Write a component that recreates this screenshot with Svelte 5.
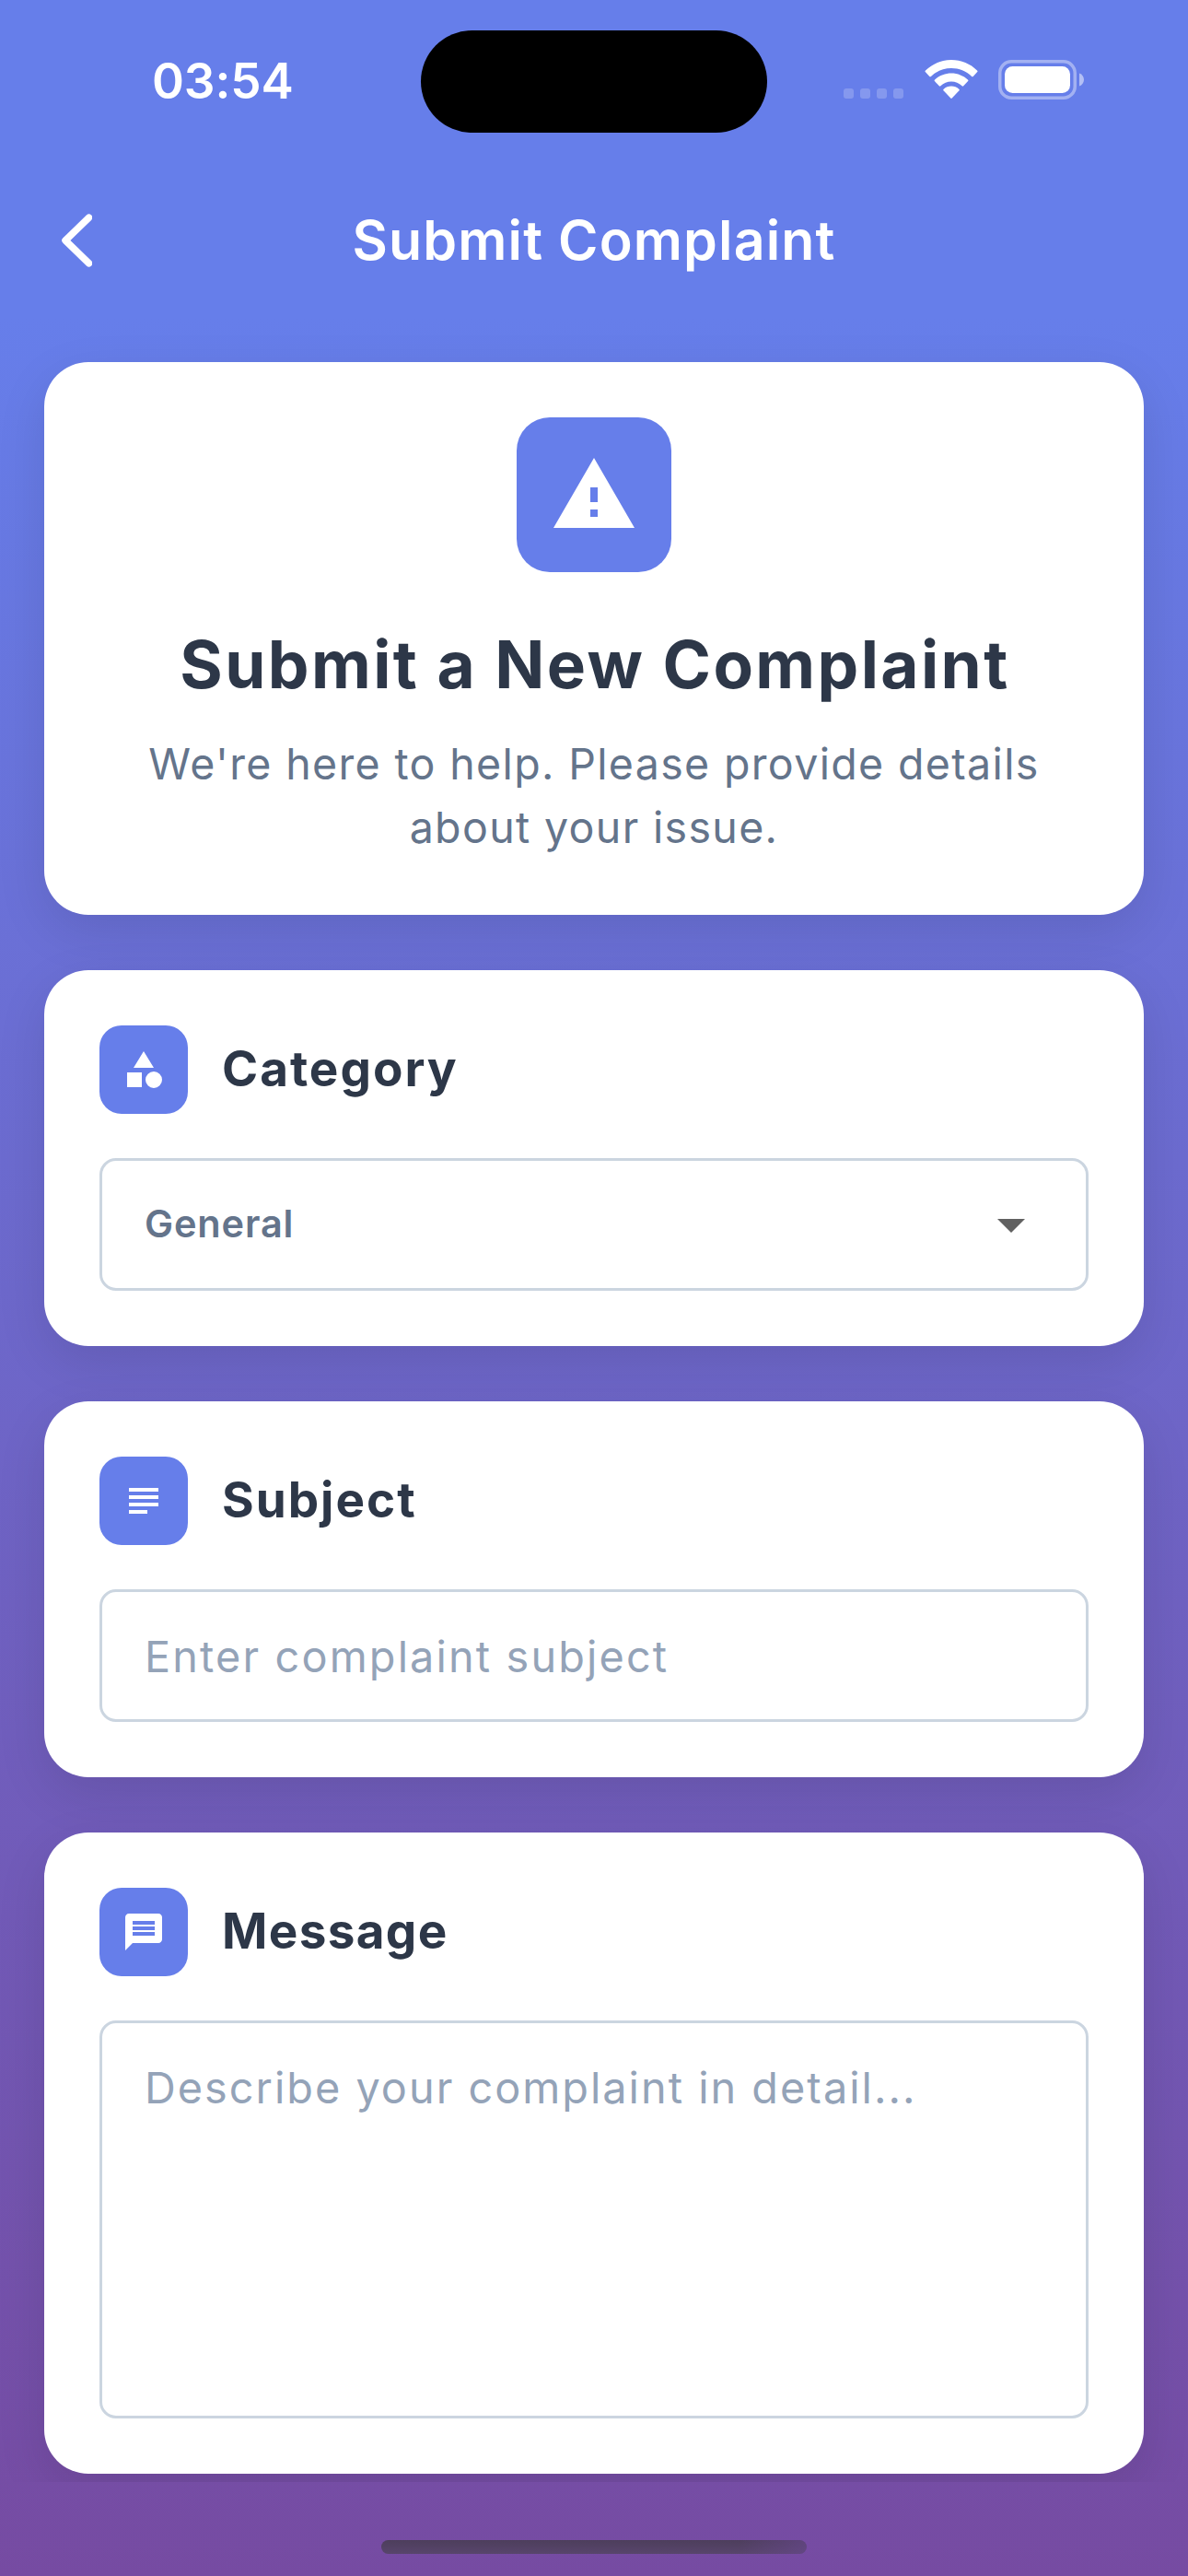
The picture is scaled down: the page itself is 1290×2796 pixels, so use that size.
<script>
  const sections = [
    { id: 'category', title: 'Category', kind: 'select', text: 'General' },
    { id: 'subject', title: 'Subject', kind: 'input', text: 'Enter complaint subject' },
    { id: 'message', title: 'Message', kind: 'area', text: 'Describe your complaint in detail...' }
  ];
  const icons = {
    category: 'M12 2l-5.5 9h11z M22 17.5a4.5 4.5 0 1 1-9 0a4.5 4.5 0 1 1 9 0z M3 13.5h8v8H3z',
    subject: 'M14 17H4v2h10v-2zm6-8H4v2h16V9zM4 15h16v-2H4v2zM4 5v2h16V5H4z',
    message: 'M20 2H4c-1.1 0-1.99.9-1.99 2L2 22l4-4h14c1.1 0 2-.9 2-2V4c0-1.1-.9-2-2-2zm-2 12H6v-2h12v2zm0-3H6V9h12v2zm0-3H6V6h12v2z'
  };
</script>

<div class="screen">
  <header>
    <div class="status">
      <span class="time">03:54</span>
      <div class="island"></div>
      <div class="indicators">
        <svg class="dots" viewBox="0 0 65 11"><rect width="11" height="11" rx="3" /><rect x="18" width="11" height="11" rx="3" /><rect x="36" width="11" height="11" rx="3" /><rect x="54" width="11" height="11" rx="3" /></svg>
        <svg class="wifi" viewBox="0 0 58 42">
          <path d="M29 0C39.800 0 49.700 4.200 57 11.500a1.200 1.200 0 0 1 0 1.800L52.700 17.900a1.100 1.100 0 0 1-1.600 0C45 12.300 37.400 9.100 29 9.100S13 12.300 6.900 17.900a1.100 1.100 0 0 1-1.600 0L1 13.300a1.200 1.200 0 0 1 0-1.800C8.300 4.200 18.200 0 29 0z" />
          <path d="M29 14.500c6.900 0 13.200 2.700 17.900 7a1.200 1.200 0 0 1 0 1.800l-4.700 5a1.100 1.100 0 0 1-1.600 0C37.400 25.300 33.400 23.500 29 23.500s-8.400 1.800-11.600 4.800a1.100 1.100 0 0 1-1.600 0l-4.700-5a1.200 1.200 0 0 1 0-1.800c4.700-4.300 11-7 17.900-7z" />
          <path d="M29 28.600c3.200 0 6.100 1.200 8.300 3.200a1.100 1.100 0 0 1 0 1.700L29.700 41.600a1 1 0 0 1-1.400 0l-7.600-8.100a1.100 1.100 0 0 1 0-1.700c2.200-2 5.100-3.200 8.300-3.200z" />
        </svg>
        <svg class="battery" viewBox="0 0 94 43">
          <rect class="shell" x="1.750" y="1.750" width="81.500" height="39.500" rx="12.500" />
          <rect x="7" y="7" width="71" height="29" rx="8.500" />
          <path class="nub" d="M88 14.500c3 1 5 3.800 5 7s-2 6-5 7z" />
        </svg>
      </div>
    </div>
    <div class="nav">
      <svg class="back" viewBox="0 0 33 58"><path d="M29.500 4.200L4 29l25.500 24.800" /></svg>
      <h1>Submit Complaint</h1>
    </div>
  </header>

  <main>
    <section class="card hero">
      <div class="badge"><svg viewBox="0 0 24 24"><path d="M1 21h22L12 2 1 21zm12-3h-2v-2h2v2zm0-4h-2v-4h2v4z" /></svg></div>
      <h2>Submit a New Complaint</h2>
      <p>We're here to help. Please provide details<br />about your issue.</p>
    </section>

    {#each sections as s (s.id)}
      <section class="card">
        <div class="head">
          <div class="tile"><svg viewBox="0 0 24 24"><path d={icons[s.id]} /></svg></div>
          <h3 class={s.id}>{s.title}</h3>
        </div>
        <div class="field {s.kind}">
          <span>{s.text}</span>
          {#if s.kind === 'select'}
            <svg class="caret" viewBox="0 0 24 24"><path d="M7 10l5 5 5-5z" /></svg>
          {/if}
        </div>
      </section>
    {/each}
  </main>

  <footer><div class="home"></div></footer>
</div>

<style>
  :global(body) { margin: 0; }
  .screen {
    width: 1290px;
    height: 2796px;
    display: flex;
    flex-direction: column;
    overflow: hidden;
    box-sizing: border-box;
    font-family: Inter, "Liberation Sans", sans-serif;
    background: linear-gradient(#667eea 345px, #764ba2 2796px);
  }
  h1, h2, h3, p { margin: 0; }
  svg { display: block; fill: #fff; }
  header { height: 345px; flex: none; color: #fff; }
  .status {
    height: 177px;
    display: grid;
    grid-template-columns: 457px 376px 1fr;
    align-items: start;
  }
  .time {
    padding: 57px 0 0 165px;
    font-size: 53px;
    line-height: 62px;
    font-weight: 600;
    letter-spacing: -0.1px;
  }
  .island { margin-top: 33px; height: 111px; border-radius: 56px; background: #000; }
  .indicators { display: flex; padding: 65px 0 0 83px; }
  .dots { width: 65px; height: 11px; margin-top: 31px; opacity: .2; }
  .wifi { width: 58px; height: 42px; margin-left: 23px; }
  .battery { width: 94px; height: 43px; margin-left: 22px; }
  .shell { fill: none; stroke: #fff; stroke-width: 3.500; opacity: .4; }
  .nub { opacity: .5; }
  .nav {
    height: 168px;
    display: grid;
    grid-template-columns: 200px 1fr 200px;
    align-items: center;
  }
  .back { width: 33px; height: 58px; margin-left: 67px; fill: none; stroke: #fff; stroke-width: 7.500; stroke-linecap: round; stroke-linejoin: round; }
  h1 { padding-bottom: 1px; text-align: center; font-size: 59px; line-height: 72px; font-weight: 600; letter-spacing: 1.150px; white-space: nowrap; }
  main {
    height: 2349px;
    flex: none;
    box-sizing: border-box;
    padding: 48px 48px 0;
    display: flex;
    flex-direction: column;
    gap: 60px;
    overflow: hidden;
  }
  .card {
    padding: 60px;
    border-radius: 48px;
    background: #fff;
    box-shadow: 0 18px 54px rgba(0, 0, 0, .1);
  }
  .hero {
    height: 600px;
    box-sizing: border-box;
    display: flex;
    flex-direction: column;
    align-items: center;
    text-align: center;
    white-space: nowrap;
  }
  .badge { flex: none; width: 96px; height: 96px; padding: 36px; border-radius: 36px; background: #667eea; }
  h2 { margin-top: 57px; padding: 0 0 1px 2px; font-size: 71px; line-height: 86px; font-weight: 700; letter-spacing: 2.400px; color: #2d3748; }
  p { margin-top: 30px; font-size: 46.500px; line-height: 69px; letter-spacing: 1.350px; color: #64748b; }
  .head { display: flex; align-items: center; gap: 37px; }
  .tile { width: 48px; height: 48px; padding: 24px; border-radius: 24px; background: #667eea; }
  h3 { padding-bottom: 2px; font-size: 53px; line-height: 64px; font-weight: 700; letter-spacing: 2px; color: #2d3748; }
  .message { letter-spacing: 1.350px; }
  .field {
    box-sizing: border-box;
    height: 144px;
    margin-top: 48px;
    padding: 0 45px 0 46px;
    border: 3px solid #cbd5e0;
    border-radius: 18px;
    display: flex;
    align-items: center;
    justify-content: space-between;
    font-size: 46.800px;
    line-height: 60px;
    letter-spacing: 2.150px;
    color: #94a3b8;
  }
  .input { padding-top: 2px; }
  .select { font-size: 41.500px; font-weight: 600; letter-spacing: .850px; color: #64748b; }
  .select span { padding-bottom: 2px; }
  .area { height: 432px; align-items: flex-start; padding-top: 40px; letter-spacing: 2.020px; }
  .caret { width: 72px; height: 72px; fill: #616161; }
  footer { height: 102px; display: flex; justify-content: center; }
  .home {
    width: 462px;
    height: 15px;
    margin-top: 63px;
    border-radius: 8px;
    background:
      linear-gradient(90deg, transparent 84%, rgba(106, 72, 146, .6)),
      linear-gradient(#4d3e5c, #58456c);
  }
</style>
